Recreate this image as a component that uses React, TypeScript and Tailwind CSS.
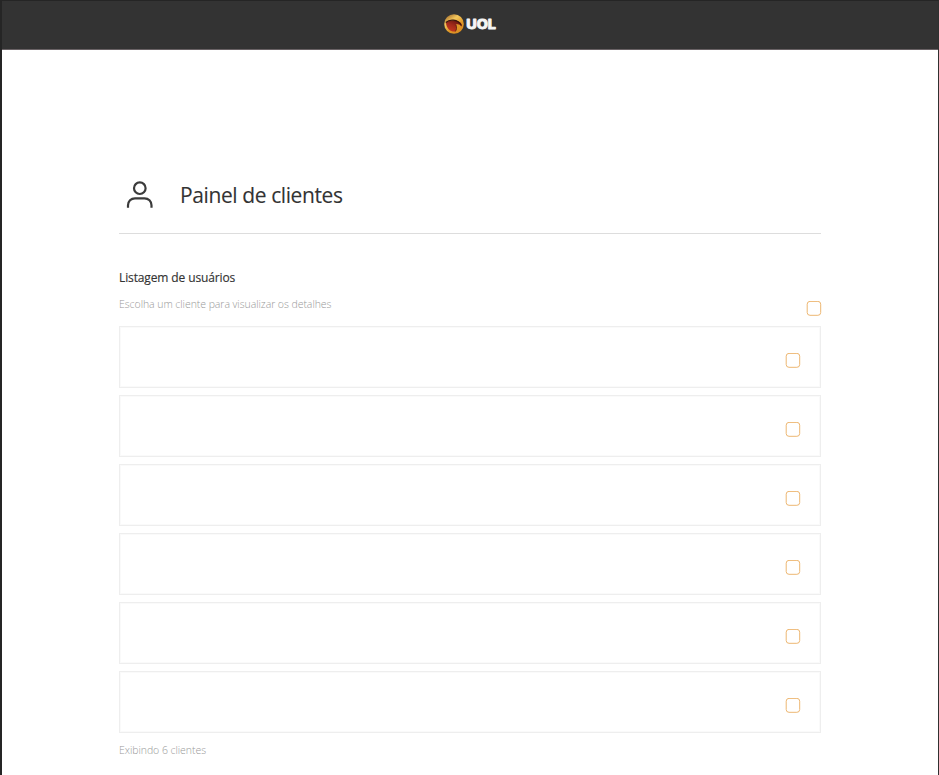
const clients = [1, 2, 3, 4, 5, 6];

function Box() {
  return (
    <svg className="block" width="16" height="15" viewBox="0 0 16 15" fill="none" stroke="#edb772">
      <rect x="1.200" y="0.400" width="13.500" height="13.900" rx="2.800" />
    </svg>
  );
}

function Logo() {
  return (
    <svg className="block" width="54" height="22" viewBox="0 0 54 22" role="img" aria-label="UOL">
      <defs>
        <linearGradient id="gold" x1="0.1" y1="0" x2="0.8" y2="1">
          <stop offset="0" stopColor="#9c6428" />
          <stop offset="0.35" stopColor="#f3c75c" />
          <stop offset="0.65" stopColor="#df9828" />
          <stop offset="1" stopColor="#d98a20" />
        </linearGradient>
        <linearGradient id="red" x1="0.8" y1="0" x2="0.2" y2="1">
          <stop offset="0" stopColor="#5d1410" />
          <stop offset="0.5" stopColor="#a32a1b" />
          <stop offset="1" stopColor="#c93b20" />
        </linearGradient>
      </defs>
      <circle cx="11" cy="11" r="9.800" fill="url(#gold)" />
      <path d="M3 9.500C6 7 13 6 17.300 9.500c1.200 1 1.500 2.500 1.200 4.200-1.800-2.200-3.600-2.800-5.500-2 .9 2.500 1.300 4.500-.7 6.800C7.500 19 3.200 15.500 3 9.500Z" fill="url(#red)" />
      <path d="M2.800 9.500C6.500 6 14.500 5.800 18.500 12.500" fill="none" stroke="#3b170f" strokeWidth="1.200" />
      <path d="M13 12c.8 2.500.8 4.500-.7 6.500" fill="none" stroke="#57200f" strokeWidth="0.800" />
      <text x="23.200" y="15.800" textLength="29.800" lengthAdjust="spacingAndGlyphs" fill="#f5f5f5" stroke="#f5f5f5" strokeWidth="0.800" strokeLinejoin="round" className="font-[Inter,sans-serif] text-[12.500px] font-extrabold">UOL</text>
    </svg>
  );
}

export default function App() {
  return (
    <div className="h-[775px] overflow-hidden border-t border-r border-l-2 border-t-[#252525] border-r-[#303030] border-l-[#252525] bg-white font-['Open_Sans',sans-serif] text-[#333]">
      <header className="flex h-[49px] justify-center border-b border-[#696265] bg-[#333] pt-3">
        <Logo />
      </header>
      <main className="ml-[117px] w-[702px] pt-[116px]">
        <div className="flex h-[68px] items-start border-b border-[#ddd] pt-[14px]">
          <svg className="ml-[7px] block" width="28" height="30" viewBox="0 0 28 30" fill="none" stroke="#3b3b3b" strokeWidth="2.200">
            <circle cx="13.800" cy="8.200" r="5.800" />
            <path d="M2 27.800v-2.500c0-4 3-7 7-7h9.500c4 0 7 3 7 7v2.500" />
          </svg>
          <h1 className="ml-[26px] text-[21px] leading-[30px] tracking-[-0.4px] [-webkit-text-stroke:0.1px_#333]">Painel de clientes</h1>
        </div>
        <div className="flex h-[92px] justify-between pt-[34px]">
          <div>
            <h2 className="text-[12px] leading-5 tracking-[-0.12px] [-webkit-text-stroke:0.15px_#333]">Listagem de usuários</h2>
            <p className="mt-2 text-[10.500px] font-light leading-4 tracking-[-0.05px] text-[#999]">Escolha um cliente para visualizar os detalhes</p>
          </div>
          <div className="-mr-[0.5px] mt-[33px]"><Box /></div>
        </div>
        <div className="flex flex-col gap-[7px]">
          {clients.map((client) => (
            <div key={client} className="flex h-[62px] items-start justify-end border border-[#eee] pt-[26px] pr-[19px] shadow-[inset_0_0_0_1px_#fafafa]">
              <Box />
            </div>
          ))}
        </div>
        <p className="mt-[9px] text-[10.500px] font-light leading-4 tracking-[-0.05px] text-[#999]">Exibindo 6 clientes</p>
      </main>
    </div>
  );
}
